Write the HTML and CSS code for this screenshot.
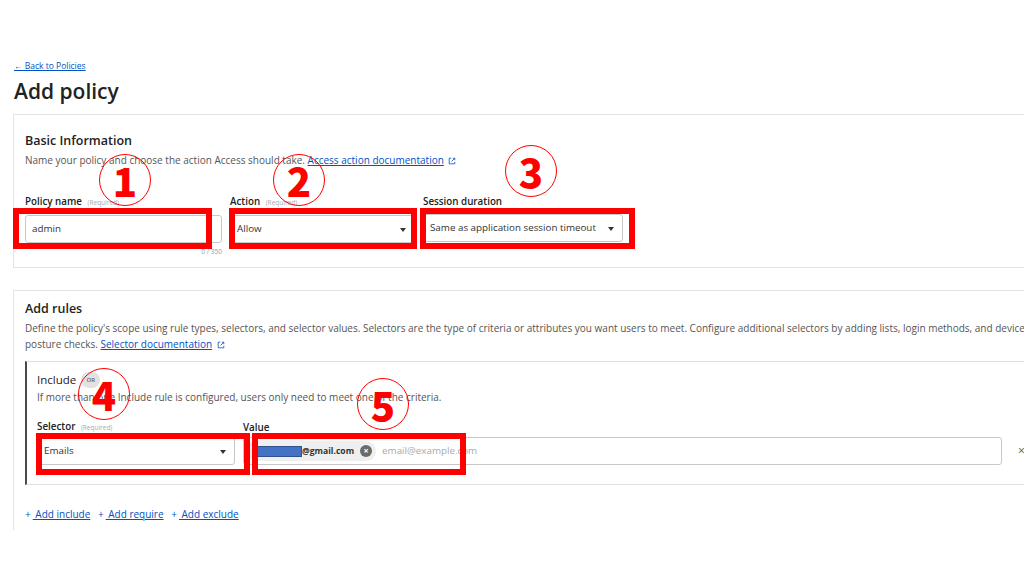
FILE: index.html
```html
<!DOCTYPE html>
<html lang="en">
<head>
	<meta charset="UTF-8">
	<title>Add policy</title>
	<link rel="stylesheet" href="styles.css">
</head>
<body>
	<div class="page">
		<a class="back" href="#">&larr; Back to Policies</a>
		<h1>Add policy</h1>

		<div class="card basic">
			<h2>Basic Information</h2>
			<p class="desc">Name your policy and choose the action Access should take. <a href="#">Access action documentation</a> <svg class="ext" viewBox="0 0 10 10"><path d="M4 1.5H1.5v7h7V6M6 1.5h2.5V4M8.5 1.5L4.5 5.5" fill="none" stroke="#0051c3" stroke-width="1"/></svg></p>
			<div class="fields">
				<div class="field f-name">
					<label>Policy name <small>(Required)</small></label>
					<div class="input">admin</div>
					<div class="count">0 / 350</div>
				</div>
				<div class="field f-action">
					<label>Action <small>(Required)</small></label>
					<div class="select">Allow<i class="caret"></i></div>
				</div>
				<div class="field f-session">
					<label>Session duration</label>
					<div class="select">Same as application session timeout<i class="caret"></i></div>
				</div>
			</div>
		</div>

		<div class="card rules">
			<h2>Add rules</h2>
			<p class="desc">Define the policy's scope using rule types, selectors, and selector values. Selectors are the type of criteria or attributes you want users to meet. Configure additional selectors by adding lists, login methods, and device posture checks. <a href="#">Selector documentation</a> <svg class="ext" viewBox="0 0 10 10"><path d="M4 1.5H1.5v7h7V6M6 1.5h2.5V4M8.5 1.5L4.5 5.5" fill="none" stroke="#0051c3" stroke-width="1"/></svg></p>

			<div class="include">
				<div class="inc-title">Include <span class="or">OR</span></div>
				<p class="desc">If more than one Include rule is configured, users only need to meet one of the criteria.</p>
				<div class="rule-row">
					<div class="field f-selector">
						<label>Selector <small>(Required)</small></label>
						<div class="select">Emails<i class="caret"></i></div>
					</div>
					<div class="field f-value">
						<label>Value</label>
						<div class="input tags">
							<span class="chip"><span class="redact"></span>@gmail.com<span class="chip-x">&times;</span></span>
							<span class="ph">email@example.com</span>
						</div>
					</div>
					<span class="row-x">&times;</span>
				</div>
			</div>

			<div class="adds">
				<a href="#"><span>+</span> Add include</a>
				<a href="#"><span>+</span> Add require</a>
				<a href="#"><span>+</span> Add exclude</a>
			</div>
		</div>
	</div>

	<!-- annotations drawn over the screenshot -->
	<div class="mark box b1"></div>
	<div class="mark box b2"></div>
	<div class="mark box b3"></div>
	<div class="mark box b4"></div>
	<div class="mark box b5"></div>
	<div class="mark num n1">1</div>
	<div class="mark num n2">2</div>
	<div class="mark num n3">3</div>
	<div class="mark num n4">4</div>
	<div class="mark num n5">5</div>
</body>
</html>
```

FILE: styles.css
```css
*{
	margin: 0;
	padding: 0;
	box-sizing: border-box;
}
body{
	background-color: #fff;
	font-family: "Open Sans", "Noto Sans", sans-serif;
	color: #313131;
	overflow: hidden;
	width: 1024px;
	height: 576px;
	position: relative;
}
a{
	color: #0051c3;
	text-decoration: underline;
}
.page{
	width: 1200px;
	padding: 60px 0 0 13px;
}
.back{
	display: block;
	font-size: 8.5px;
	line-height: 12px;
	margin-left: 1px;
}
h1{
	font-size: 21px;
	font-weight: 600;
	line-height: 26px;
	margin-top: 6px;
	margin-left: 1px;
	color: #222;
}
.card{
	border: 1px solid #e3e3e3;
	border-right: none;
	padding-left: 11px;
}
.basic{
	margin-top: 10px;
	height: 154px;
	padding-top: 17px;
}
h2{
	font-size: 12.5px;
	font-weight: 600;
	line-height: 18px;
	color: #222;
}
.desc{
	font-size: 10px;
	line-height: 16px;
	color: #555;
	margin-top: 2px;
}
.ext{
	width: 8px;
	height: 8px;
	margin-left: 2px;
	vertical-align: -0.5px;
}
.fields{
	display: flex;
	margin-top: 27px;
}
.field label{
	display: block;
	font-size: 9.8px;
	font-weight: 600;
	line-height: 14px;
	color: #222;
	margin-bottom: 5px;
}
.field label small{
	font-size: 6.5px;
	font-weight: 400;
	color: #aaa;
	margin-left: 3px;
}
.input, .select{
	height: 28px;
	border: 1px solid #c8c8c8;
	border-radius: 3px;
	font-size: 9.8px;
	line-height: 26px;
	padding: 0 6px;
	color: #333;
	position: relative;
}
.caret{
	position: absolute;
	right: 8px;
	top: 12px;
	width: 0;
	height: 0;
	border-left: 3.5px solid transparent;
	border-right: 3.5px solid transparent;
	border-top: 4px solid #333;
}
.f-name{
	width: 197px;
	margin-right: 8px;
}
.count{
	text-align: right;
	font-size: 6.5px;
	color: #999;
	line-height: 10px;
	margin-top: 4px;
}
.f-action{
	width: 185px;
	margin-right: 8px;
}
.f-session .select{
	padding-right: 26px;
}
.rules{
	margin-top: 22px;
	height: 240px;
	border-bottom: none;
	padding-top: 9px;
}
.rules > .desc{
	width: 1010px;
}
.include{
	margin-top: 9px;
	border: 1px solid #e0e0e0;
	border-left: 2px solid #4a4a4a;
	border-right: none;
	height: 124px;
	padding: 9px 0 0 10px;
}
.inc-title{
	font-size: 11.5px;
	line-height: 18px;
	color: #222;
	display: flex;
	align-items: center;
}
.or{
	display: inline-block;
	width: 19px;
	height: 16px;
	border-radius: 8px;
	background-color: #e2e2e2;
	color: #666;
	font-size: 6px;
	font-weight: 600;
	line-height: 16px;
	text-align: center;
	margin-left: 5px;
}
.include .desc{
	margin-top: 0;
}
.rule-row{
	display: flex;
	align-items: flex-end;
	margin-top: 15px;
}
.rule-row .field label{
	margin-bottom: 2px;
}
.f-selector{
	width: 198px;
	margin-right: 8px;
}
.f-value{
	width: 759px;
}
.tags{
	display: flex;
	align-items: center;
	padding: 0 4px 0 3px;
}
.chip{
	display: inline-flex;
	align-items: center;
	height: 20px;
	background-color: #efefef;
	border-radius: 10px;
	padding: 0 4px 0 8px;
	font-size: 8.6px;
	font-weight: 700;
	color: #333;
	line-height: 20px;
}
.redact{
	display: inline-block;
	width: 47px;
	height: 11px;
	background-color: #4472c4;
	border: 1px solid #2f528f;
}
.chip-x{
	display: inline-block;
	width: 12px;
	height: 12px;
	border-radius: 50%;
	background-color: #6b6b6b;
	color: #fff;
	font-size: 9px;
	line-height: 12px;
	text-align: center;
	margin-left: 6px;
}
.ph{
	font-size: 9.8px;
	color: #aaa;
	margin-left: 6px;
}
.row-x{
	font-size: 12px;
	color: #555;
	margin-left: 16px;
	line-height: 28px;
}
.adds{
	margin-top: 22px;
	font-size: 10px;
	line-height: 14px;
}
.adds a{
	margin-right: 5px;
}
.adds a span{
	display: inline-block;
	color: #0051c3;
	margin-right: 2px;
}

/* red annotation marks */
.mark{
	position: absolute;
}
.box{
	border: 6px solid #ff0000;
}
.b1{ left: 13px; top: 208px; width: 199px; height: 41px; }
.b2{ left: 229px; top: 208px; width: 188px; height: 41px; }
.b3{ left: 420px; top: 208px; width: 215px; height: 41px; }
.b4{ left: 36px; top: 433px; width: 214px; height: 42px; }
.b5{ left: 252px; top: 433px; width: 214px; height: 42px; }
.num{
	width: 52px;
	height: 52px;
	border: 1.5px solid #ff0000;
	border-radius: 50%;
	color: #ff0000;
	font-family: "Noto Sans CJK JP", "Noto Sans", sans-serif;
	font-weight: 900;
	font-size: 40px;
	line-height: 50px;
	text-align: center;
}
.n1{ left: 99px; top: 154px; }
.n2{ left: 273px; top: 154px; }
.n3{ left: 505px; top: 145px; }
.n4{ left: 78px; top: 368px; }
.n5{ left: 357px; top: 378px; }
```
